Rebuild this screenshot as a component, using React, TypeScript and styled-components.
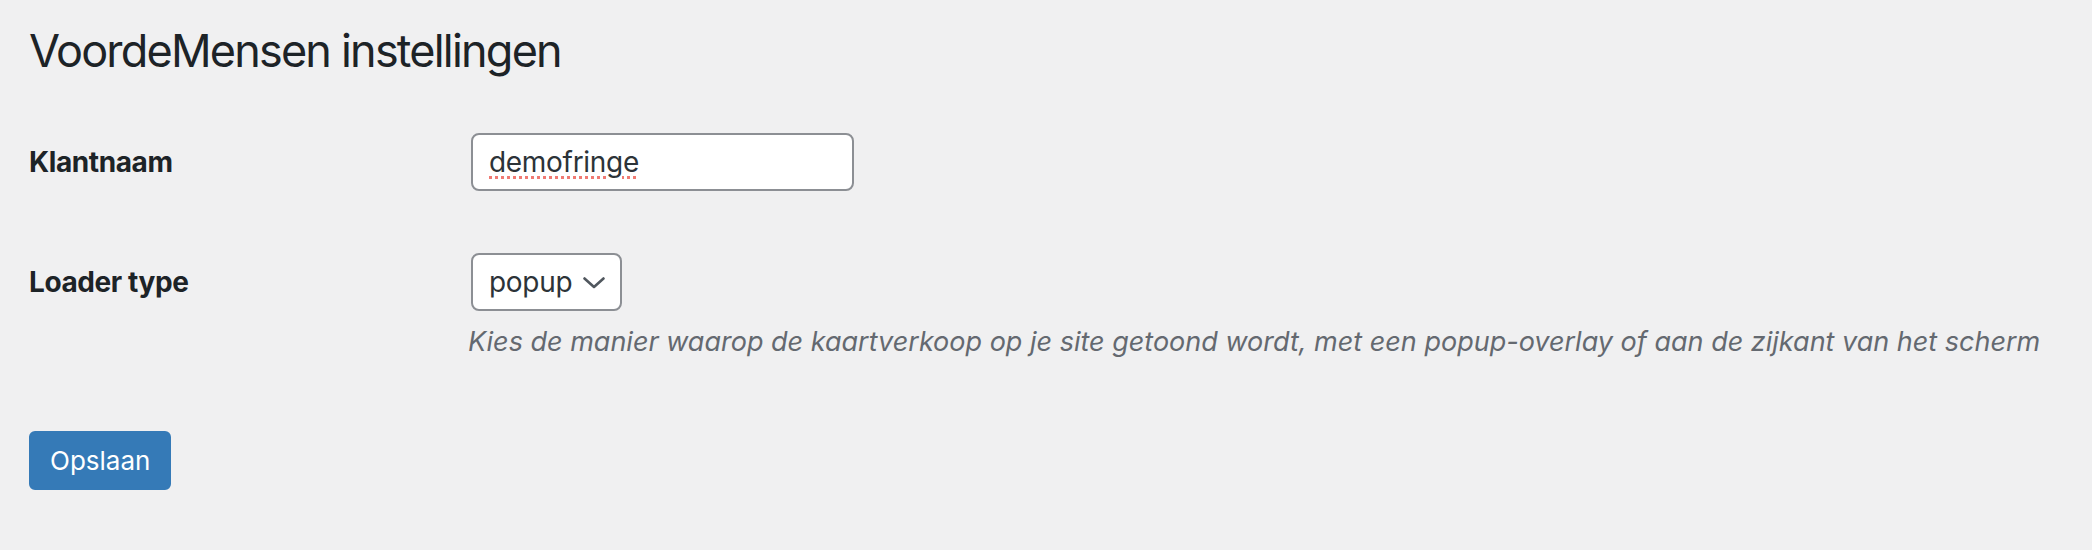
import styled, { createGlobalStyle } from "styled-components";

const GlobalStyle = createGlobalStyle`
  html, body {
    margin: 0;
    padding: 0;
    background: #f0f0f1;
  }
  body {
    font-family: Inter, "Noto Sans", "Liberation Sans", sans-serif;
    color: #1d2327;
  }
`;

const Wrap = styled.div`
  padding: 21px 28px 40px 29px;
`;

const Title = styled.h1`
  margin: 0;
  font-size: 45px;
  font-weight: 400;
  line-height: 60px;
  letter-spacing: -1.8px;
  color: #1d2327;
`;

const Form = styled.form`
  display: flex;
  flex-direction: column;
  margin-top: 52px;
`;

const Row = styled.div<{ $gap?: number }>`
  display: grid;
  grid-template-columns: 442px 1fr;
  margin-bottom: ${(p) => p.$gap ?? 0}px;
`;

const Label = styled.label`
  display: flex;
  align-items: center;
  height: 58px;
  font-size: 28px;
  font-weight: 700;
  letter-spacing: -0.4px;
  color: #1d2327;
`;

const Field = styled.div`
  display: flex;
  flex-direction: column;
  align-items: flex-start;
`;

const InputBox = styled.div`
  position: relative;
`;

const TextInput = styled.input`
  box-sizing: border-box;
  width: 383px;
  height: 58px;
  padding: 0 16px;
  font-family: inherit;
  font-size: 28px;
  letter-spacing: -0.3px;
  color: #2c3338;
  background: #fff;
  border: 2px solid #8c8f94;
  border-radius: 8px;
  outline: none;
`;

const SpellMark = styled.span`
  position: absolute;
  left: 18px;
  top: 0;
  height: 58px;
  line-height: 56px;
  font-size: 28px;
  letter-spacing: -0.3px;
  color: transparent;
  pointer-events: none;
  text-decoration: underline dotted #f07a73;
  text-decoration-thickness: 3px;
  text-underline-offset: 5px;
`;

const SelectBox = styled.div`
  position: relative;
`;

const Select = styled.select`
  box-sizing: border-box;
  appearance: none;
  width: 151px;
  height: 58px;
  padding: 0 36px 0 16px;
  font-family: inherit;
  font-size: 28px;
  letter-spacing: -0.3px;
  color: #2c3338;
  background: #fff;
  border: 2px solid #8c8f94;
  border-radius: 8px;
  outline: none;
`;

const Chevron = styled.svg`
  position: absolute;
  right: 17px;
  top: 24px;
  width: 22px;
  height: 12px;
  pointer-events: none;
`;

const Description = styled.p`
  margin: 10px 0 0 -3px;
  font-size: 27px;
  line-height: 42px;
  font-style: italic;
  color: #646970;
`;

const Submit = styled.button`
  align-self: flex-start;
  height: 59px;
  padding: 0 19px;
  font-family: inherit;
  font-size: 26px;
  color: #fff;
  background: #357ab7;
  border: 2px solid #357ab7;
  border-radius: 6px;
  cursor: pointer;
`;

export default function App() {
  return (
    <>
      <GlobalStyle />
      <Wrap>
        <Title>VoordeMensen instellingen</Title>
        <Form onSubmit={(e) => e.preventDefault()}>
          <Row $gap={62}>
            <Label htmlFor="klantnaam">Klantnaam</Label>
            <Field>
              <InputBox>
                <TextInput id="klantnaam" type="text" defaultValue="demofringe" />
                <SpellMark>demofringe</SpellMark>
              </InputBox>
            </Field>
          </Row>
          <Row $gap={68}>
            <Label htmlFor="loader">Loader type</Label>
            <Field>
              <SelectBox>
                <Select id="loader" defaultValue="popup">
                  <option value="popup">popup</option>
                  <option value="zijkant">zijkant</option>
                </Select>
                <Chevron viewBox="0 0 22 12">
                  <polyline
                    points="1.5,1.5 11,10 20.5,1.5"
                    fill="none"
                    stroke="#50575e"
                    strokeWidth="2.6"
                    strokeLinecap="round"
                    strokeLinejoin="round"
                  />
                </Chevron>
              </SelectBox>
              <Description>
                Kies de manier waarop de kaartverkoop op je site getoond wordt,
                met een popup-overlay of aan de zijkant van het scherm
              </Description>
            </Field>
          </Row>
          <Submit type="submit">Opslaan</Submit>
        </Form>
      </Wrap>
    </>
  );
}
